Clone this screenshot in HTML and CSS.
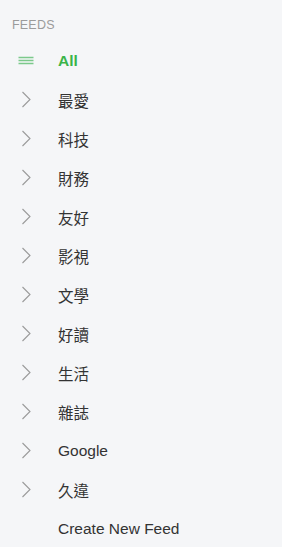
FILE: index.html
```html
<!DOCTYPE html>
<html>
<head>
  <meta charset="UTF-8">
  <title>Feeds</title>
  <link rel="stylesheet" href="styles.css">
</head>
<body>
  <div class="sidebar">
    <div class="section-title">FEEDS</div>
    <ul class="feed-list">
      <li class="feed-item active">
        <span class="feed-icon">
          <svg width="16" height="9" viewBox="0 0 16 9"><path d="M0.5 1.5h15M0.5 4.5h15M0.5 7.5h15" stroke="#7cc98b" stroke-width="1.5"/></svg>
        </span>
        <span class="feed-name">All</span>
      </li>
      <li class="feed-item">
        <span class="feed-icon"><svg class="chevron" width="10" height="17" viewBox="0 0 10 17"><path d="M1.5 1l7.5 7.5-7.5 7.5" fill="none" stroke="#9a9a9a" stroke-width="1.1"/></svg></span>
        <span class="feed-name">最愛</span>
      </li>
      <li class="feed-item">
        <span class="feed-icon"><svg class="chevron" width="10" height="17" viewBox="0 0 10 17"><path d="M1.5 1l7.5 7.5-7.5 7.5" fill="none" stroke="#9a9a9a" stroke-width="1.1"/></svg></span>
        <span class="feed-name">科技</span>
      </li>
      <li class="feed-item">
        <span class="feed-icon"><svg class="chevron" width="10" height="17" viewBox="0 0 10 17"><path d="M1.5 1l7.5 7.5-7.5 7.5" fill="none" stroke="#9a9a9a" stroke-width="1.1"/></svg></span>
        <span class="feed-name">財務</span>
      </li>
      <li class="feed-item">
        <span class="feed-icon"><svg class="chevron" width="10" height="17" viewBox="0 0 10 17"><path d="M1.5 1l7.5 7.5-7.5 7.5" fill="none" stroke="#9a9a9a" stroke-width="1.1"/></svg></span>
        <span class="feed-name">友好</span>
      </li>
      <li class="feed-item">
        <span class="feed-icon"><svg class="chevron" width="10" height="17" viewBox="0 0 10 17"><path d="M1.5 1l7.5 7.5-7.5 7.5" fill="none" stroke="#9a9a9a" stroke-width="1.1"/></svg></span>
        <span class="feed-name">影視</span>
      </li>
      <li class="feed-item">
        <span class="feed-icon"><svg class="chevron" width="10" height="17" viewBox="0 0 10 17"><path d="M1.5 1l7.5 7.5-7.5 7.5" fill="none" stroke="#9a9a9a" stroke-width="1.1"/></svg></span>
        <span class="feed-name">文學</span>
      </li>
      <li class="feed-item">
        <span class="feed-icon"><svg class="chevron" width="10" height="17" viewBox="0 0 10 17"><path d="M1.5 1l7.5 7.5-7.5 7.5" fill="none" stroke="#9a9a9a" stroke-width="1.1"/></svg></span>
        <span class="feed-name">好讀</span>
      </li>
      <li class="feed-item">
        <span class="feed-icon"><svg class="chevron" width="10" height="17" viewBox="0 0 10 17"><path d="M1.5 1l7.5 7.5-7.5 7.5" fill="none" stroke="#9a9a9a" stroke-width="1.1"/></svg></span>
        <span class="feed-name">生活</span>
      </li>
      <li class="feed-item">
        <span class="feed-icon"><svg class="chevron" width="10" height="17" viewBox="0 0 10 17"><path d="M1.5 1l7.5 7.5-7.5 7.5" fill="none" stroke="#9a9a9a" stroke-width="1.1"/></svg></span>
        <span class="feed-name">雜誌</span>
      </li>
      <li class="feed-item">
        <span class="feed-icon"><svg class="chevron" width="10" height="17" viewBox="0 0 10 17"><path d="M1.5 1l7.5 7.5-7.5 7.5" fill="none" stroke="#9a9a9a" stroke-width="1.1"/></svg></span>
        <span class="feed-name">Google</span>
      </li>
      <li class="feed-item">
        <span class="feed-icon"><svg class="chevron" width="10" height="17" viewBox="0 0 10 17"><path d="M1.5 1l7.5 7.5-7.5 7.5" fill="none" stroke="#9a9a9a" stroke-width="1.1"/></svg></span>
        <span class="feed-name">久違</span>
      </li>
      <li class="feed-item">
        <span class="feed-icon"></span>
        <span class="feed-name">Create New Feed</span>
      </li>
    </ul>
  </div>
</body>
</html>
```

FILE: styles.css
```css
body {
  font-family: "Liberation Sans", Arial, "Noto Sans CJK TC", sans-serif;
  margin: 0;
  background-color: #f5f6f8;
}

.sidebar {
  width: 282px;
  height: 547px;
  padding-top: 16px;
  box-sizing: border-box;
}

.section-title {
  padding-left: 12px;
  font-size: 12.5px;
  color: #9b9b9b;
  line-height: 18px;
  letter-spacing: 0.2px;
}

.feed-list {
  list-style: none;
  margin: 7px 0 0;
  padding: 0;
}

.feed-item {
  display: flex;
  align-items: center;
  height: 39px;
  color: #333;
  font-size: 15.5px;
}

.feed-icon {
  width: 58px;
  padding-left: 18px;
  box-sizing: border-box;
  display: flex;
  align-items: center;
}

.feed-icon .chevron {
  margin-left: 3px;
}

.feed-item.active .feed-name {
  color: #3bb449;
  font-weight: bold;
}
```
